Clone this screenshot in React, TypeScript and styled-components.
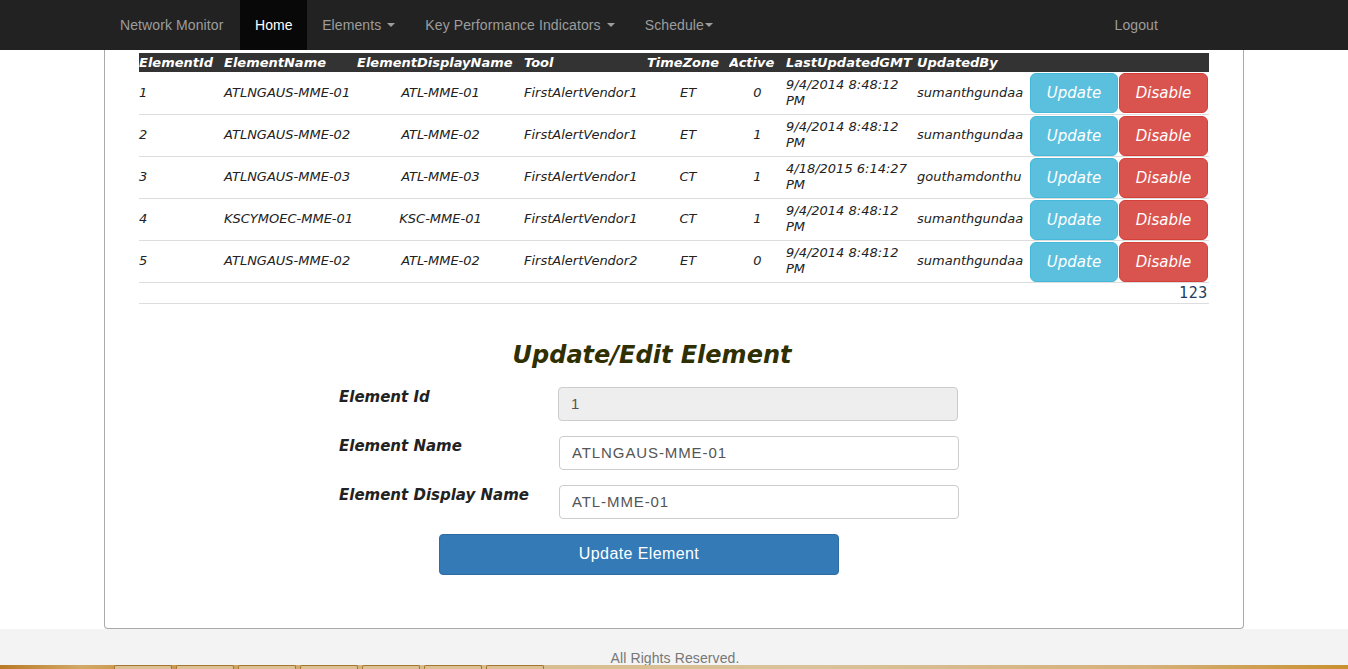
import React from "react";
import styled, { createGlobalStyle } from "styled-components";

const GlobalStyle = createGlobalStyle`
  html, body { margin: 0; padding: 0; background: #fff; }
  body { font-family: "Liberation Sans", Arial, sans-serif; font-size: 14px; color: #333; }
  * { box-sizing: border-box; }
`;

const Navbar = styled.nav`
  height: 50px;
  background: #222;
  display: flex;
  align-items: stretch;
  padding-left: 105px;
`;

const Brand = styled.a`
  display: flex;
  align-items: center;
  padding: 0 17px 0 15px;
  color: #9d9d9d;
  font-size: 14px;
  letter-spacing: 0.1px;
  text-decoration: none;
`;

const NavItem = styled.a<{ $active?: boolean }>`
  display: flex;
  align-items: center;
  padding: 0 ${(p) => (p.$active ? "14.5px" : "15px")};
  font-size: 14px;
  letter-spacing: 0.1px;
  color: ${(p) => (p.$active ? "#fff" : "#9d9d9d")};
  background: ${(p) => (p.$active ? "#080808" : "transparent")};
  text-decoration: none;
`;

const Caret = styled.span<{ $tight?: boolean }>`
  display: inline-block;
  width: 0;
  height: 0;
  margin-left: ${(p) => (p.$tight ? "1px" : "6px")};
  border-top: 4px solid #9d9d9d;
  border-left: 4px solid transparent;
  border-right: 4px solid transparent;
  vertical-align: middle;
`;

const Spacer = styled.div`
  flex: 1;
`;

const Logout = styled(NavItem)`
  margin-right: 175px;
`;

const Box = styled.main`
  margin: 0 104px;
  border: 1px solid #aaa;
  border-top: none;
  border-radius: 0 0 4px 4px;
  padding: 3px 34px 53px 34px;
`;

const Table = styled.table`
  width: 1070px;
  border-collapse: collapse;
  table-layout: fixed;
  font-family: "DejaVu Sans", Verdana, sans-serif;
  font-style: italic;
  font-size: 13px;
  color: #222;
`;

const HeadRow = styled.tr`
  background: #333;
`;

const Th = styled.th`
  height: 19px;
  padding: 0;
  text-align: left;
  color: #fff;
  font-weight: bold;
  font-size: 13px;
  line-height: 18px;
  white-space: nowrap;
  overflow: hidden;
`;

const Row = styled.tr`
  border-bottom: 1px solid #ddd;
`;

const Td = styled.td<{ $align?: string }>`
  height: 42px;
  padding: 0;
  text-align: ${(p) => p.$align || "left"};
  vertical-align: middle;
  line-height: 16px;
`;

const ActionCell = styled.td`
  padding: 1px 0 0 0;
  vertical-align: top;
`;

const ActionGroup = styled.div`
  display: flex;
  gap: 1px;
`;

const RowButton = styled.button<{ $kind: "info" | "danger" }>`
  height: 40px;
  width: ${(p) => (p.$kind === "info" ? "88px" : "89px")};
  border: 1px solid ${(p) => (p.$kind === "info" ? "#46b8da" : "#d43f3a")};
  background: ${(p) => (p.$kind === "info" ? "#5bc0de" : "#d9534f")};
  color: #fff;
  border-radius: 6px;
  font-family: "DejaVu Sans", Verdana, sans-serif;
  font-style: italic;
  font-size: 15px;
  padding: 0;
`;

const PagerRow = styled.tr`
  border-bottom: 1px solid #ddd;
`;

const PagerCell = styled.td`
  height: 20px;
  padding: 0 1px 0 0;
  text-align: right;
  font-style: normal;
  font-family: "DejaVu Sans Mono", monospace;
  font-size: 15px;
  letter-spacing: 0.6px;
  color: #1f3d5c;
  line-height: 20px;
`;

const FormWrap = styled.section`
  width: 620px;
  margin: 36px 0 0 200px;
`;

const Heading = styled.h2`
  margin: 0 0 17px 0;
  text-align: center;
  font-family: "DejaVu Sans", Verdana, sans-serif;
  font-style: italic;
  font-weight: bold;
  font-size: 24px;
  line-height: 30px;
  color: #2f2f00;
  padding-left: 6px;
`;

const FieldRow = styled.div`
  display: grid;
  grid-template-columns: 219px 400px;
  align-items: start;
  margin-bottom: 15px;
`;

const Label = styled.label`
  padding-top: 1px;
  font-family: "DejaVu Sans", Verdana, sans-serif;
  font-style: italic;
  font-weight: bold;
  font-size: 15px;
  line-height: 18px;
  color: #222;
`;

const Input = styled.input<{ $shift?: boolean }>`
  width: 400px;
  height: 34px;
  margin-left: ${(p) => (p.$shift ? "1px" : "0")};
  padding: 0 12px;
  border: 1px solid #ccc;
  border-radius: 4px;
  font-family: "Liberation Sans", Arial, sans-serif;
  font-size: 15px;
  letter-spacing: 0.9px;
  color: #555;
  background: #fff;
  &:disabled {
    background: #eee;
    color: #555;
  }
`;

const SubmitButton = styled.button`
  display: block;
  width: 400px;
  height: 41px;
  margin-left: 100px;
  background: #337ab7;
  border: 1px solid #2e6da4;
  border-radius: 4px;
  color: #fff;
  font-family: "Liberation Sans", Arial, sans-serif;
  font-size: 16px;
  letter-spacing: 0.4px;
`;

const Footer = styled.footer`
  background: #f3f3f3;
  height: 36px;
  display: flex;
  align-items: flex-end;
  justify-content: center;
  overflow: hidden;
`;

const FooterText = styled.span`
  font-family: "Liberation Sans", Arial, sans-serif;
  font-size: 14px;
  color: #777;
  line-height: 14px;
  margin-bottom: 0;
  padding-left: 2px;
  letter-spacing: 0.1px;
`;

const Strip = styled.div`
  height: 20px;
  background: linear-gradient(90deg, #b87a25 0%, #d3a867 6%, #c99447 10%, #d8bb8a 30%, #d9c29a 60%, #d5b07a 85%, #c8912f 100%);
  display: flex;
  gap: 4px;
  padding-left: 114px;
`;

const StripTab = styled.div`
  width: 58px;
  height: 20px;
  background: #dcc196;
  border: 1px solid #a6762e;
  border-bottom: none;
  border-radius: 2px 2px 0 0;
`;

type Item = {
  id: number;
  name: string;
  display: string;
  tool: string;
  tz: string;
  active: number;
  date: string;
  by: string;
};

const rows: Item[] = [
  { id: 1, name: "ATLNGAUS-MME-01", display: "ATL-MME-01", tool: "FirstAlertVendor1", tz: "ET", active: 0, date: "9/4/2014 8:48:12 PM", by: "sumanthgundaa" },
  { id: 2, name: "ATLNGAUS-MME-02", display: "ATL-MME-02", tool: "FirstAlertVendor1", tz: "ET", active: 1, date: "9/4/2014 8:48:12 PM", by: "sumanthgundaa" },
  { id: 3, name: "ATLNGAUS-MME-03", display: "ATL-MME-03", tool: "FirstAlertVendor1", tz: "CT", active: 1, date: "4/18/2015 6:14:27 PM", by: "gouthamdonthu" },
  { id: 4, name: "KSCYMOEC-MME-01", display: "KSC-MME-01", tool: "FirstAlertVendor1", tz: "CT", active: 1, date: "9/4/2014 8:48:12 PM", by: "sumanthgundaa" },
  { id: 5, name: "ATLNGAUS-MME-02", display: "ATL-MME-02", tool: "FirstAlertVendor2", tz: "ET", active: 0, date: "9/4/2014 8:48:12 PM", by: "sumanthgundaa" },
];

const colWidths = [85, 133, 167, 123, 82, 57, 131, 113, 179];

export default function App() {
  return (
    <>
      <GlobalStyle />
      <Navbar>
        <Brand>Network Monitor</Brand>
        <NavItem $active>Home</NavItem>
        <NavItem>
          Elements <Caret />
        </NavItem>
        <NavItem>
          Key Performance Indicators <Caret />
        </NavItem>
        <NavItem>
          Schedule<Caret $tight />
        </NavItem>
        <Spacer />
        <Logout>Logout</Logout>
      </Navbar>
      <Box>
        <Table>
          <colgroup>
            {colWidths.map((w, i) => (
              <col key={i} style={{ width: w }} />
            ))}
          </colgroup>
          <thead>
            <HeadRow>
              <Th>ElementId</Th>
              <Th>ElementName</Th>
              <Th>ElementDisplayName</Th>
              <Th>Tool</Th>
              <Th>TimeZone</Th>
              <Th>Active</Th>
              <Th>LastUpdatedGMT</Th>
              <Th>UpdatedBy</Th>
              <Th />
            </HeadRow>
          </thead>
          <tbody>
            {rows.map((r) => (
              <Row key={r.id}>
                <Td>{r.id}</Td>
                <Td>{r.name}</Td>
                <Td $align="center">{r.display}</Td>
                <Td>{r.tool}</Td>
                <Td $align="center">{r.tz}</Td>
                <Td $align="center">{r.active}</Td>
                <Td>{r.date}</Td>
                <Td>{r.by}</Td>
                <ActionCell>
                  <ActionGroup>
                    <RowButton $kind="info">Update</RowButton>
                    <RowButton $kind="danger">Disable</RowButton>
                  </ActionGroup>
                </ActionCell>
              </Row>
            ))}
            <PagerRow>
              <PagerCell colSpan={9}>123</PagerCell>
            </PagerRow>
          </tbody>
        </Table>
        <FormWrap>
          <Heading>Update/Edit Element</Heading>
          <FieldRow>
            <Label>Element Id</Label>
            <Input disabled value="1" readOnly />
          </FieldRow>
          <FieldRow>
            <Label>Element Name</Label>
            <Input $shift defaultValue="ATLNGAUS-MME-01" />
          </FieldRow>
          <FieldRow>
            <Label>Element Display Name</Label>
            <Input $shift defaultValue="ATL-MME-01" />
          </FieldRow>
          <SubmitButton>Update Element</SubmitButton>
        </FormWrap>
      </Box>
      <Footer>
        <FooterText>All Rights Reserved.</FooterText>
      </Footer>
      <Strip>
        {Array.from({ length: 7 }).map((_, i) => (
          <StripTab key={i} />
        ))}
      </Strip>
    </>
  );
}
